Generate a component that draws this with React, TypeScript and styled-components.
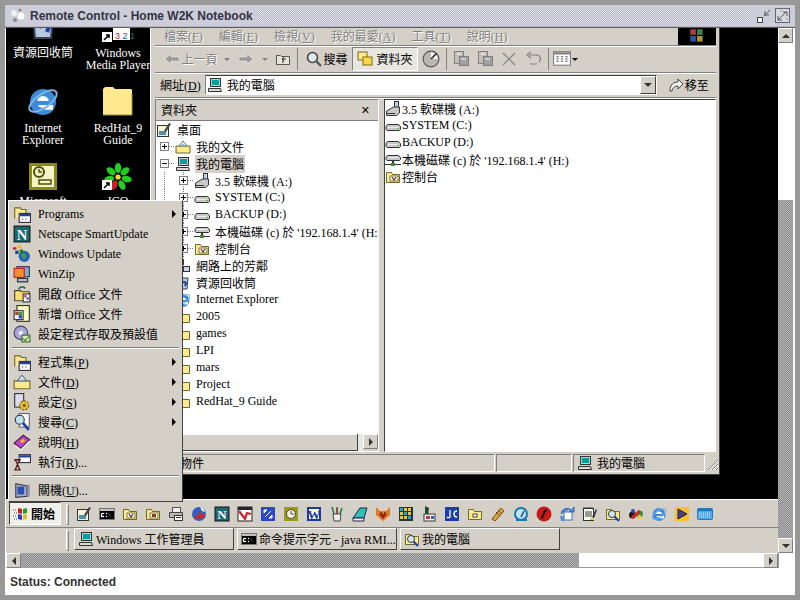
import React from 'react';
import styled, { createGlobalStyle } from 'styled-components';

const GREY = '#d4d0c8';
const UI_FONT = '"Liberation Serif", "Noto Sans CJK TC", serif';

const GlobalStyle = createGlobalStyle`
  html, body { margin: 0; padding: 0; width: 800px; height: 600px; overflow: hidden; }
  body { background: #989898; font-family: ${UI_FONT}; font-size: 12px; color: #000; }
`;

const N = ({ c, t }: { c: string; t: string }) => (
  <text x="8" y="13" fontSize="13" fontWeight="bold" fontFamily="Liberation Serif" textAnchor="middle" fill={c}>{t}</text>
);

const folder = (
  <path d="M1.5 13.5V3.5h5l1 2h7v8z" fill="#ffe98f" stroke="#6b6b2a" />
);
const glyphs: Record<string, React.ReactNode> = {
  folder,
  docs: (
    <>
      <path d="M1 14V7h14v7z" fill="#ffe98f" stroke="#6b6b2a" />
      <path d="M4 7l4-5 4 5z" fill="#fff" stroke="#5a7a8a" />
      <path d="M7 5l2 0 1 2H6z" fill="#8fb4d8" />
    </>
  ),
  computer: (
    <>
      <rect x="3.5" y="1.5" width="10" height="8" fill="#c8c8c8" stroke="#333" />
      <rect x="5" y="3" width="7" height="5" fill="#00a0a0" />
      <path d="M1.5 11.5h12l1 3h-13z" fill="#d8d8d8" stroke="#333" />
    </>
  ),
  floppy: (
    <>
      <rect x="9.5" y="0.5" width="4" height="7" fill="#bcd2ee" stroke="#333" />
      <path d="M1.5 10l7-4h6v6l-3 2.5h-10z" fill="#c8c8c8" stroke="#333" />
      <rect x="2" y="12" width="8" height="1" fill="#333" />
    </>
  ),
  drive: (
    <>
      <path d="M2.5 6.5h11l2 2v3l-1 1H2l-1-1v-3z" fill="#c8c8c8" stroke="#333" />
      <rect x="3" y="9" width="10" height="1" fill="#eee" />
      <rect x="12" y="10" width="2" height="1" fill="#3c3" />
    </>
  ),
  netdrive: (
    <>
      <path d="M2.5 3.5h11l2 2v2l-1 1H2l-1-1v-2z" fill="#c8c8c8" stroke="#333" />
      <rect x="3" y="5" width="10" height="1" fill="#eee" />
      <rect x="7" y="9" width="2" height="3" fill="#333" />
      <rect x="0" y="12" width="16" height="1" fill="#333" />
      <rect x="6" y="11" width="4" height="3" fill="#3a8a3a" />
    </>
  ),
  control: (
    <>
      {folder}
      <rect x="5" y="7" width="8" height="5" fill="#fff" stroke="#7a7a30" />
      <path d="M7 8l2 3 2-3" fill="none" stroke="#803030" strokeWidth="1.3" />
    </>
  ),
  desktop: (
    <>
      <rect x="1.5" y="3.5" width="11" height="11" fill="#f8f4d0" stroke="#333" />
      <path d="M3 9h7v4H3z" fill="#4a90b8" />
      <path d="M8 9l5-8 2 1-5 8z" fill="#444" />
    </>
  ),
  network: (
    <>
      <rect x="2.5" y="1.5" width="6" height="5" fill="#c8d8e8" stroke="#334" />
      <rect x="8.5" y="8.5" width="6" height="5" fill="#c8d8e8" stroke="#334" />
      <path d="M5 7v7h3" fill="none" stroke="#334" />
    </>
  ),
  recycle: (
    <>
      <path d="M3 3h10l-1 11H4z" fill="#b8c8e0" stroke="#345" />
      <path d="M6 9a3 3 0 0 1 5-1l-1 3" fill="none" stroke="#1a40b0" strokeWidth="2" />
    </>
  ),
  ie: (
    <>
      <circle cx="8" cy="8.5" r="6.5" fill="#3c8ad8" />
      <circle cx="8" cy="8.5" r="3" fill="#fff" />
      <rect x="4.5" y="8" width="8" height="2" fill="#3c8ad8" />
      <rect x="9" y="10" width="4" height="2.4" fill="#fff" />
      <ellipse cx="8" cy="8" rx="8" ry="3.4" fill="none" stroke="#7ab4e8" strokeWidth="1" transform="rotate(-35 8 8)" />
    </>
  ),
  programs: (
    <>
      <path d="M1.5 12V2.5h5l1 1.5h4v3" fill="#ffe98f" stroke="#6b6b2a" />
      <rect x="5.5" y="7.5" width="10" height="8" fill="#fff" stroke="#334" />
      <rect x="6" y="8" width="9" height="2" fill="#2040a0" />
      <rect x="8" y="12" width="1" height="1" fill="#444" />
      <rect x="11" y="12" width="1" height="1" fill="#444" />
    </>
  ),
  netscape: (
    <>
      <rect x="1" y="1" width="14" height="14" fill="#1a6a72" stroke="#111" />
      <N c="#fff" t="N" />
    </>
  ),
  wupdate: (
    <>
      <circle cx="10" cy="10" r="5" fill="#2860c0" />
      <path d="M7 9l3-2 2 3-2 3z" fill="#40a040" />
      <rect x="0" y="2" width="3" height="2" fill="#c02020" />
      <rect x="4" y="0" width="3" height="3" fill="#e0c020" />
      <rect x="2" y="5" width="3" height="3" fill="#2040a0" />
      <rect x="6" y="4" width="3" height="3" fill="#208020" />
    </>
  ),
  winzip: (
    <>
      <rect x="3.5" y="1.5" width="11" height="9" fill="#88a8d0" stroke="#334" />
      <rect x="1" y="3" width="9" height="8" fill="#f09030" stroke="#c02030" />
      <path d="M4 12h9v3H4z" fill="#b8b8c8" stroke="#334" />
    </>
  ),
  openoffice: (
    <>
      <path d="M1.5 14V5h5l1 1h7v8z" fill="#ffe070" stroke="#443" />
      <path d="M5 4c1-3 4-3 6-1" fill="none" stroke="#207040" strokeWidth="1.5" />
      <rect x="9" y="8" width="6" height="7" fill="#fff" stroke="#333" />
      <rect x="10" y="9" width="2" height="2" fill="#d03030" />
      <rect x="12" y="11" width="2" height="2" fill="#3050c0" />
    </>
  ),
  newoffice: (
    <>
      <rect x="3.5" y="0.5" width="11" height="14" fill="#ffffc0" stroke="#333" />
      <rect x="1" y="5" width="8" height="8" fill="#fff" stroke="#333" />
      <rect x="2" y="6" width="3" height="3" fill="#d03030" />
      <rect x="5" y="9" width="3" height="3" fill="#3050c0" />
      <rect x="5" y="6" width="3" height="3" fill="#30a040" />
    </>
  ),
  defaults: (
    <>
      <circle cx="7" cy="7" r="6" fill="#a8a8d8" stroke="#446" />
      <circle cx="7" cy="7" r="2" fill="#eef" />
      <rect x="8" y="9" width="7" height="6" fill="#e8e8c0" stroke="#363" />
      <path d="M9 12l2 2 3-4" fill="none" stroke="#209020" />
    </>
  ),
  settings: (
    <>
      <rect x="1.5" y="0.5" width="8" height="12" fill="#dde" stroke="#334" />
      <circle cx="10" cy="11" r="4" fill="#e8c030" stroke="#806010" strokeDasharray="2 1" />
      <circle cx="10" cy="11" r="1.5" fill="#806010" />
    </>
  ),
  search: (
    <>
      <rect x="5.5" y="0.5" width="9" height="12" fill="#fff" stroke="#667" />
      <circle cx="6" cy="6" r="4" fill="#bfe0f0" stroke="#334" />
      <path d="M9 9l5 6" stroke="#2040a0" strokeWidth="2.4" />
    </>
  ),
  help: (
    <>
      <path d="M1 9l8-7 6 4-8 8z" fill="#c040c0" stroke="#402040" />
      <path d="M6 7l3-2 2 2-3 2z" fill="#f0c030" />
      <path d="M2 11l5 4 8-8" fill="none" stroke="#fff" />
    </>
  ),
  run: (
    <>
      <rect x="5.5" y="1.5" width="10" height="7" fill="#fff" stroke="#334" />
      <rect x="6" y="2" width="9" height="2" fill="#2040a0" />
      <path d="M1 6h6M1 15h6M2 6l2 4-2 5M6 6L4 10l2 5" fill="none" stroke="#602020" strokeWidth="1.2" />
    </>
  ),
  shutdown: (
    <>
      <path d="M2.5 2.5l10 2v9l-10 1z" fill="#a8b0c8" stroke="#334" />
      <rect x="4" y="5" width="6" height="7" fill="#2850b0" />
      <rect x="13" y="3" width="2" height="11" fill="#99a" />
    </>
  ),
  flag: (
    <>
      <path d="M5 2l4 1v5L5 7z" fill="#d02020" />
      <path d="M10 3l4-1v5l-4 1z" fill="#20a030" />
      <path d="M5 8l4 1v5l-4-1z" fill="#2040c0" />
      <path d="M10 9l4-1v5l-4 1z" fill="#e0c020" />
      <path d="M0 4h3M1 7h3M0 10h3M1 13h3" stroke="#555" strokeDasharray="1 1" />
    </>
  ),
  cmd: (
    <>
      <rect x="0.5" y="2.5" width="15" height="11" fill="#000" stroke="#777" />
      <rect x="1" y="3" width="14" height="2" fill="#c0c0c0" />
      <path d="M3 7h2v1H3v2h2v1H2V8zM7 7h1v1H7zM7 10h1v1H7zM9 7l3 4" fill="#fff" stroke="#fff" strokeWidth="0.3" />
    </>
  ),
  phone: (
    <>
      {folder}
      <rect x="5" y="7" width="8" height="5" fill="#fff" stroke="#7a7a30" />
      <rect x="7" y="8" width="4" height="3" fill="#903030" />
    </>
  ),
  printer: (
    <>
      <rect x="4.5" y="1.5" width="8" height="5" fill="#eee" stroke="#555" />
      <path d="M1.5 6.5h13v5h-13z" fill="#b8b8b8" stroke="#444" />
      <rect x="6.5" y="9.5" width="8" height="5" fill="#fff" stroke="#333" />
      <rect x="8" y="11" width="5" height="1" fill="#333" />
    </>
  ),
  globe: (
    <>
      <circle cx="8" cy="8" r="7" fill="#2a60c8" />
      <path d="M3 13l2-5 2 2 2-6 2 5 2-3 1 6z" fill="#c03030" />
      <path d="M9 1a7 7 0 0 1 5 5l-3-1z" fill="#fff" />
    </>
  ),
  redwhite: (
    <>
      <rect x="1" y="1" width="14" height="14" fill="#fff" stroke="#222" />
      <rect x="1" y="1" width="14" height="3" fill="#223" />
      <path d="M2 5l6 8 2-6 4 1" fill="none" stroke="#d02020" strokeWidth="2.2" />
    </>
  ),
  bluearrows: (
    <>
      <rect x="1" y="1" width="14" height="14" fill="#2c48c8" />
      <path d="M4 4h3L4 7zM12 12H9l3-3zM8 8l3-3M8 8l-3 3" fill="#fff" stroke="#fff" />
    </>
  ),
  clock: (
    <>
      <rect x="1" y="1" width="14" height="14" fill="#9a9a18" />
      <circle cx="8" cy="8" r="4.5" fill="#f4f4d8" stroke="#445" />
      <path d="M8 5v3h3" fill="none" stroke="#445" />
    </>
  ),
  word: (
    <>
      <rect x="1" y="1" width="14" height="14" fill="#1a3aa0" />
      <rect x="3" y="3" width="10" height="10" fill="#fff" />
      <N c="#1a3aa0" t="W" />
    </>
  ),
  pencils: (
    <>
      <path d="M4 8h8l-1 7H5z" fill="#f0f0e8" stroke="#444" />
      <path d="M5 8L3 1M8 8V1M11 8l2-6" stroke="#208040" strokeWidth="1.6" />
      <path d="M8 8V2" stroke="#c03030" strokeWidth="1.4" />
    </>
  ),
  eraser: (
    <>
      <path d="M1 12L8 2h7l-3 10z" fill="#30c0b8" stroke="#224" />
      <path d="M1 12h11v3H1z" fill="#eef" stroke="#224" />
    </>
  ),
  fox: (
    <>
      <path d="M1 1l4 4h6l4-4v8l-7 6-7-6z" fill="#e07820" />
      <path d="M4 8h8l-4 5z" fill="#a02010" />
      <path d="M5 7h2M9 7h2" stroke="#111" />
    </>
  ),
  grid: (
    <>
      <rect x="1" y="1" width="14" height="14" fill="#234" />
      {[2, 6, 10].map((x) => [2, 6, 10].map((y) => (
        <rect key={`${x}-${y}`} x={x} y={y} width="3" height="3" fill={x === y ? '#30a0d0' : '#e8c830'} />
      )))}
    </>
  ),
  bottle: (
    <>
      <rect x="3" y="8" width="11" height="7" fill="#fff" stroke="#333" />
      <path d="M4 0l4 2-1 7-3-2z" fill="#243" />
      <rect x="5" y="10" width="4" height="3" fill="#d03030" />
      <rect x="10" y="10" width="3" height="3" fill="#3060c0" />
    </>
  ),
  jc: (
    <>
      <rect x="1" y="1" width="14" height="14" fill="#1c3ea8" />
      <path d="M6 4v7a2 2 0 0 1-3 0M13 5a3 3 0 1 0 0 6" fill="none" stroke="#fff" strokeWidth="1.3" />
    </>
  ),
  yfolder: (
    <>
      {folder}
      <rect x="6" y="8" width="4" height="3" fill="#fff" stroke="#444" />
    </>
  ),
  wrench: (
    <>
      <path d="M2 13L11 2l3 3L5 15z" fill="#e8a040" stroke="#705018" />
      <path d="M6 6l4 4M8 4l4 4" stroke="#705018" />
    </>
  ),
  quick: (
    <>
      <circle cx="8" cy="8" r="6" fill="#bfe4f4" stroke="#1878b0" strokeWidth="2" />
      <path d="M8 11l3-6" stroke="#2040a0" strokeWidth="1.6" />
      <rect x="3" y="13" width="11" height="2" fill="#1878b0" />
    </>
  ),
  flash: (
    <>
      <circle cx="8" cy="8" r="7.5" fill="#c81818" />
      <path d="M5 12c3 0 2-8 6-8" fill="none" stroke="#111" strokeWidth="2" />
    </>
  ),
  sync: (
    <>
      <path d="M2 8a6 6 0 0 1 10-4l-2 2h5V1l-1 1" fill="#5890d8" stroke="#2c5aa0" />
      <rect x="5" y="6" width="8" height="8" fill="#fff" stroke="#4070b0" />
      <path d="M1 10h4v5H2z" fill="#5890d8" />
    </>
  ),
  notepad: (
    <>
      <rect x="1.5" y="2.5" width="10" height="12" fill="#fff" stroke="#333" />
      <path d="M2 1v2M4 1v2M6 1v2M8 1v2M10 1v2M3 6h7M3 8h7M3 10h7" stroke="#333" />
      <path d="M10 11l4-8 1 1-3 8z" fill="#333" />
      <rect x="8" y="12" width="4" height="2" fill="#e8d040" />
    </>
  ),
  findfolder: (
    <>
      {folder}
      <circle cx="7" cy="8" r="3.5" fill="#cfe8f8" stroke="#334" />
      <path d="M9.5 10.5l4.5 4.5" stroke="#2040a0" strokeWidth="2.2" />
    </>
  ),
  chain: (
    <>
      <circle cx="4.5" cy="9" r="3.5" fill="#181818" />
      <circle cx="11.5" cy="8" r="3.5" fill="#20a040" />
      <path d="M4 12l8-7" stroke="#d02828" strokeWidth="3" />
      <circle cx="11.5" cy="11" r="2" fill="#f0d020" />
      <circle cx="5" cy="5" r="2" fill="#2050c0" />
    </>
  ),
  play: (
    <>
      <rect x="1" y="1" width="14" height="14" fill="#f8c030" />
      <path d="M4 3l9 5-9 5z" fill="#4a4088" stroke="#223" />
    </>
  ),
  keyboard: (
    <>
      <rect x="0.5" y="2.5" width="15" height="11" rx="1" fill="#48a8e8" stroke="#2878b8" />
      <path d="M2 7h12M2 9h12M2 11h12" stroke="#d8f0ff" strokeDasharray="1 1" />
      <rect x="1" y="3" width="14" height="2" fill="#1878c8" />
    </>
  ),
  back: <path d="M1 8l6-5v3h8v4H7v3z" fill="#9a9a9a" stroke="#fff" strokeWidth="0.4" />,
  forward: <path d="M15 8L9 3v3H1v4h8v3z" fill="#9a9a9a" stroke="#fff" strokeWidth="0.4" />,
  up: (
    <>
      <path d="M1.5 13.5v-9h4l1 1h8v8z" fill="#e8e4d8" stroke="#555" />
      <path d="M8 12V8h3M9 6L7 8l2 2" fill="none" stroke="#333" />
    </>
  ),
  searchtool: (
    <>
      <circle cx="6.5" cy="6.5" r="5" fill="#dfe8e8" stroke="#444" strokeWidth="1.6" />
      <path d="M10 10l5 5" stroke="#555" strokeWidth="2.4" />
    </>
  ),
  foldertool: (
    <>
      <rect x="1" y="1" width="9" height="8" fill="#ffe98f" stroke="#7a6a10" />
      <rect x="6" y="6" width="9" height="8" fill="#ffd84a" stroke="#7a6a10" />
    </>
  ),
  history: (
    <>
      <circle cx="8" cy="8" r="7" fill="#b8b8b0" stroke="#555" />
      <path d="M8 8V2a6 6 0 0 1 6 6z" fill="#fff" />
      <path d="M8 8l5-5" stroke="#333" strokeWidth="1.5" />
    </>
  ),
  move: (
    <>
      <rect x="1.5" y="0.5" width="9" height="12" fill="#c4c0b8" stroke="#808080" />
      <rect x="6.5" y="5.5" width="9" height="9" fill="#a0a0a0" stroke="#808080" />
      <path d="M4 3h4M8 8h5" stroke="#fff" />
    </>
  ),
  close: <path d="M2 2l12 12M14 2L2 14" stroke="#808080" strokeWidth="1.2" />,
  undo: <path d="M14 11a4 4 0 0 0-3-7H4M6 1L2 4l4 3M5 13h7" fill="none" stroke="#808080" strokeWidth="1.2" />,
  views: (
    <>
      <rect x="0.5" y="1.5" width="15" height="12" fill="#fff" stroke="#808080" />
      <rect x="1" y="2" width="14" height="2" fill="#808080" />
      <path d="M3 6h2M7 6h2M11 6h2M3 8h2M7 8h2M11 8h2M3 10h2M7 10h2M11 10h2" stroke="#555" />
    </>
  ),
  go: <path d="M2 14c0-7 4-9 8-9V2l5 5-5 5V9c-3 0-5 1-6 5z" fill="#f4f4f0" stroke="#444" />,
};

const Icon = ({ name, size = 16 }: { name: string; size?: number }) => (
  <IconSvg viewBox="0 0 16 16" width={size} height={size}>{glyphs[name]}</IconSvg>
);

const IconSvg = styled.svg`
  flex: none;
  display: block;
`;

const Key = styled.span`
  text-decoration: underline;
`;

const App: React.FC = () => (
  <>
    <GlobalStyle />
    <Frame>
      <TitleBar>
        <TitleLogo viewBox="0 0 16 16" width={16} height={16}>
          <circle cx="4" cy="5" r="3" fill="#f0f0f0" />
          <circle cx="11" cy="8" r="3.5" fill="#fff" />
          <circle cx="5" cy="12" r="2" fill="#888" />
          <circle cx="10" cy="2" r="1.5" fill="#888" />
        </TitleLogo>
        <TitleText>Remote Control - Home W2K Notebook</TitleText>
        <Stipple />
        <TitleButtons>
          <svg viewBox="0 0 16 16" width={16} height={16}>
            <rect x="1.5" y="9.5" width="5" height="5" fill="#f4f4f8" stroke="#444" />
            <path d="M8 8l6-6M9 3v4h4" fill="none" stroke="#555" />
          </svg>
          <svg viewBox="0 0 16 16" width={16} height={16}>
            <rect x="0.5" y="0.5" width="14" height="14" fill="#d8d8e0" stroke="#666" />
            <path d="M3 12l8-8M8 4h4v4M3 8v4h4" fill="none" stroke="#555" />
            <path d="M5 3h2M12 10v2" stroke="#999" />
          </svg>
        </TitleButtons>
      </TitleBar>
      <Viewport>
        <Remote>
          <Desktop>
            {desktopIcons.map((d) => (
              <DesktopIcon key={d.top} $x={d.x} $y={d.y}>
                {d.logo}
                {d.lines.map((l) => <DesktopLabel key={l}>{l}</DesktopLabel>)}
              </DesktopIcon>
            ))}
            <Explorer />
          </Desktop>
          <Taskbar>
            <QuickRow>
              <StartButton>
                <Icon name="flag" />
                <StartText>開始</StartText>
              </StartButton>
              <Grip />
              <QuickIcons>
                {quickLaunch.map((q, i) => <Icon key={i} name={q} />)}
              </QuickIcons>
            </QuickRow>
            <TaskRow>
              <Grip />
              {tasks.map((t) => (
                <TaskButton key={t.label}>
                  <Icon name={t.icon} />
                  <TaskLabel>{t.label}</TaskLabel>
                </TaskButton>
              ))}
            </TaskRow>
          </Taskbar>
          <StartMenu>
            {startItems.map((item, i) =>
              item === null ? (
                <MenuDivider key={i} />
              ) : (
                <MenuItem key={item.icon + i}>
                  <Icon name={item.icon} size={18} />
                  <MenuText>{item.label}</MenuText>
                  {item.arrow && <SubArrow />}
                </MenuItem>
              ),
            )}
          </StartMenu>
        </Remote>
        <VBar>
          <ScrollBtn><ArrowUp /></ScrollBtn>
          <VTrack />
          <VThumb />
          <ScrollBtn><ArrowDown /></ScrollBtn>
        </VBar>
      </Viewport>
      <HBar>
        <ScrollBtn><ArrowLeft /></ScrollBtn>
        <HThumb />
        <HTrack />
        <ScrollBtn><ArrowRight /></ScrollBtn>
        <Corner />
      </HBar>
      <StatusLine>Status: Connected</StatusLine>
    </Frame>
  </>
);

const Explorer: React.FC = () => (
  <ExplorerWindow>
    <MenuBar>
      {menus.map(([label, key]) => (
        <MenuLabel key={key}>{label}(<Key>{key}</Key>)</MenuLabel>
      ))}
      <Throbber>
        <svg viewBox="0 0 16 16" width={18} height={18}>
          <rect x="2" y="2" width="5" height="5" fill="#a04040" />
          <rect x="8" y="2" width="5" height="5" fill="#408040" />
          <rect x="2" y="8" width="5" height="5" fill="#3050a0" />
          <rect x="8" y="8" width="5" height="5" fill="#b09030" />
        </svg>
      </Throbber>
    </MenuBar>
    <ToolBar>
      <Tool $w={56} $muted><Icon name="back" /><span>上一頁</span></Tool>
      <Tool $w={16}><Caret $muted /></Tool>
      <Tool $w={22}><Icon name="forward" /></Tool>
      <Tool $w={16}><Caret $muted /></Tool>
      <Tool $w={19}><Icon name="up" /></Tool>
      <ToolSep $w={10} />
      <Tool $w={50}><Icon name="searchtool" /><span>搜尋</span></Tool>
      <Tool $w={66} $pressed $gap={3}><Icon name="foldertool" /><span>資料夾</span></Tool>
      <Tool $w={26}><Icon name="history" size={18} /></Tool>
      <ToolSep $w={4} />
      <Tool $w={26}><Icon name="move" /></Tool>
      <Tool $w={22}><Icon name="move" /></Tool>
      <Tool $w={25}><Icon name="close" /></Tool>
      <Tool $w={23}><Icon name="undo" /></Tool>
      <ToolSep $w={8} />
      <Tool $w={26}><Icon name="views" size={18} /><Caret /></Tool>
    </ToolBar>
    <AddressBar>
      <span>網址(<Key>D</Key>)</span>
      <AddressBox>
        <Icon name="computer" />
        <AddressText>我的電腦</AddressText>
        <ComboButton><ArrowDown /></ComboButton>
      </AddressBox>
      <GoButton><Icon name="go" />移至</GoButton>
    </AddressBar>
    <Panes>
      <TreePane>
        <PaneHeader>
          <span>資料夾</span>
          <PaneClose>✕</PaneClose>
        </PaneHeader>
        <Tree>
          {tree.map((row) => (
            <TreeRow key={row.label} $depth={row.depth}>
              {row.depth > 0 && <Expander $open={row.open} $blank={row.blank} />}
              <Icon name={row.icon} />
              <TreeText $selected={row.selected}>{row.label}</TreeText>
            </TreeRow>
          ))}
        </Tree>
        <TreeScroll>
          <TreeThumb />
          <TreeStipple />
          <ScrollBtn><ArrowRight /></ScrollBtn>
        </TreeScroll>
      </TreePane>
      <FileList>
        {files.map((f) => (
          <FileRow key={f.label}>
            <Icon name={f.icon} />
            <span>{f.label}</span>
          </FileRow>
        ))}
      </FileList>
    </Panes>
    <StatusBar>
      <StatusCell $w={340}>7 個物件</StatusCell>
      <StatusCell $w={76} />
      <StatusCell $w={132}><Icon name="computer" />我的電腦</StatusCell>
      <SizeGrip viewBox="0 0 12 16" width={12} height={16}>
        <path d="M12 4L2 14M12 8l-6 6M12 12l-2 2" stroke="#808080" />
        <path d="M12 5L3 14M12 9l-5 5M12 13l-1 1" stroke="#fff" />
      </SizeGrip>
    </StatusBar>
  </ExplorerWindow>
);

const desktopIcons = [
  {
    top: 'recycle', x: 21, y: -18, lines: ['資源回收筒'],
    logo: <Icon name="recycle" size={32} />,
  },
  {
    top: 'wmp', x: 96, y: -18, lines: ['Windows', 'Media Player'],
    logo: (
      <svg viewBox="0 0 32 32" width={32} height={32}>
        <rect x="11" y="18" width="17" height="12" fill="#fff" />
        <rect x="0" y="22" width="10" height="10" fill="#fff" />
        <path d="M2 30l5-5M4 25h3v3" stroke="#000" strokeWidth="1.5" fill="none" />
        <text x="13" y="29" fontSize="9" fontFamily="Liberation Sans" fill="#205090">
          <tspan fill="#b02020">3</tspan> 2 <tspan fill="#208040">1</tspan>
        </text>
      </svg>
    ),
  },
  {
    top: 'ie', x: 21, y: 57, lines: ['Internet', 'Explorer'],
    logo: <Icon name="ie" size={32} />,
  },
  {
    top: 'redhat', x: 96, y: 57, lines: ['RedHat_9', 'Guide'],
    logo: (
      <svg viewBox="0 0 32 32" width={32} height={32}>
        <path d="M1 30V4l2-2h8l2 2h16l1 1v25z" fill="#ffe88e" />
        <path d="M1 30h29V9" fill="none" stroke="#a09040" />
      </svg>
    ),
  },
  {
    top: 'outlook', x: 21, y: 130, lines: ['Microsoft'],
    logo: (
      <svg viewBox="0 0 32 32" width={32} height={32}>
        <rect x="2" y="5" width="28" height="27" fill="#8a8a10" />
        <rect x="5" y="8" width="22" height="21" fill="#f4f4c8" />
        <circle cx="12" cy="14" r="5" fill="#f4f4c8" stroke="#505008" strokeWidth="2" />
        <path d="M12 11v3h3M12 22h12v4H12z" fill="none" stroke="#505008" strokeWidth="1.5" />
      </svg>
    ),
  },
  {
    top: 'icq', x: 96, y: 130, lines: ['ICQ'],
    logo: (
      <svg viewBox="0 0 32 32" width={32} height={32}>
        {[0, 51, 103, 154, 206, 257, 309].map((a) => (
          <ellipse key={a} cx="16" cy="10" rx="3.2" ry="5" fill={a === 206 ? '#d02020' : '#20d020'} transform={`rotate(${a} 16 19)`} />
        ))}
        <circle cx="16" cy="19" r="2.6" fill="#f0e020" />
        <rect x="0" y="22" width="10" height="10" fill="#fff" />
        <path d="M2 30l5-5M4 25h3v3" stroke="#000" strokeWidth="1.5" fill="none" />
      </svg>
    ),
  },
];

const quickLaunch = [
  'desktop', 'cmd', 'control', 'phone', 'printer', 'globe', 'netscape', 'redwhite', 'bluearrows', 'clock',
  'word', 'pencils', 'eraser', 'fox', 'grid', 'bottle', 'jc', 'yfolder', 'wrench', 'quick',
  'flash', 'sync', 'notepad', 'findfolder', 'chain', 'ie', 'play', 'keyboard',
];

const tasks = [
  { icon: 'computer', label: 'Windows 工作管理員' },
  { icon: 'cmd', label: '命令提示字元 - java RMI...' },
  { icon: 'findfolder', label: '我的電腦' },
];

const startItems: ({ icon: string; label: React.ReactNode; arrow?: boolean } | null)[] = [
  { icon: 'programs', label: 'Programs', arrow: true },
  { icon: 'netscape', label: 'Netscape SmartUpdate' },
  { icon: 'wupdate', label: 'Windows Update' },
  { icon: 'winzip', label: 'WinZip' },
  { icon: 'openoffice', label: '開啟 Office 文件' },
  { icon: 'newoffice', label: '新增 Office 文件' },
  { icon: 'defaults', label: '設定程式存取及預設值' },
  null,
  { icon: 'programs', label: <>程式集(<Key>P</Key>)</>, arrow: true },
  { icon: 'docs', label: <>文件(<Key>D</Key>)</>, arrow: true },
  { icon: 'settings', label: <>設定(<Key>S</Key>)</>, arrow: true },
  { icon: 'search', label: <>搜尋(<Key>C</Key>)</>, arrow: true },
  { icon: 'help', label: <>說明(<Key>H</Key>)</> },
  { icon: 'run', label: <>執行(<Key>R</Key>)...</> },
  null,
  { icon: 'shutdown', label: <>關機(<Key>U</Key>)...</> },
];

const menus = [
  ['檔案', 'F'], ['編輯', 'E'], ['檢視', 'V'], ['我的最愛', 'A'], ['工具', 'T'], ['說明', 'H'],
];

type TreeItem = {
  label: string; icon: string; depth: number;
  open?: boolean; blank?: boolean; selected?: boolean;
};

const tree: TreeItem[] = [
  { label: '桌面', icon: 'desktop', depth: 0 },
  { label: '我的文件', icon: 'docs', depth: 1 },
  { label: '我的電腦', icon: 'computer', depth: 1, open: true, selected: true },
  { label: '3.5 軟碟機 (A:)', icon: 'floppy', depth: 2 },
  { label: 'SYSTEM (C:)', icon: 'drive', depth: 2 },
  { label: 'BACKUP (D:)', icon: 'drive', depth: 2 },
  { label: "本機磁碟 (c) 於 '192.168.1.4' (H:)", icon: 'netdrive', depth: 2 },
  { label: '控制台', icon: 'control', depth: 2 },
  { label: '網路上的芳鄰', icon: 'network', depth: 1, blank: true },
  { label: '資源回收筒', icon: 'recycle', depth: 1, blank: true },
  { label: 'Internet Explorer', icon: 'ie', depth: 1, blank: true },
  { label: '2005', icon: 'folder', depth: 1, blank: true },
  { label: 'games', icon: 'folder', depth: 1, blank: true },
  { label: 'LPI', icon: 'folder', depth: 1, blank: true },
  { label: 'mars', icon: 'folder', depth: 1, blank: true },
  { label: 'Project', icon: 'folder', depth: 1, blank: true },
  { label: 'RedHat_9 Guide', icon: 'folder', depth: 1, blank: true },
];

const files = [
  { label: '3.5 軟碟機 (A:)', icon: 'floppy' },
  { label: 'SYSTEM (C:)', icon: 'drive' },
  { label: 'BACKUP (D:)', icon: 'drive' },
  { label: "本機磁碟 (c) 於 '192.168.1.4' (H:)", icon: 'netdrive' },
  { label: '控制台', icon: 'control' },
];

const Frame = styled.div`
  width: 790px;
  height: 590px;
  margin: 5px;
  background: #fff;
  display: flex;
  flex-direction: column;
`;

const TitleBar = styled.div`
  height: 22px;
  flex: none;
  background: #cdcdda;
  display: flex;
  align-items: center;
  padding: 0 4px 0 5px;
  box-shadow: inset 0 -1px 0 #b8b8c4;
`;

const TitleLogo = styled.svg`
  flex: none;
  margin-right: 4px;
`;

const TitleText = styled.span`
  font: bold 12px "Liberation Sans", sans-serif;
  color: #333344;
  white-space: nowrap;
`;

const stipple = (a: string, b: string) => `
  background: repeating-conic-gradient(${a} 0 25%, ${b} 0 50%) 0 0 / 2px 2px;
`;

const Stipple = styled.div`
  flex: 1;
  height: 16px;
  margin: 0 5px;
  ${stipple('#b4b4c0', '#e4e4ee')}
`;

const TitleButtons = styled.div`
  display: flex;
  gap: 3px;
`;

const Viewport = styled.div`
  height: 526px;
  flex: none;
  display: flex;
  padding-left: 1px;
  border-top: 1px solid #5c5c5c;
  padding-right: 2px;
  box-sizing: border-box;
`;

const Remote = styled.div`
  position: relative;
  width: 773px;
  display: flex;
  flex-direction: column;
`;

const Desktop = styled.div`
  position: relative;
  flex: 1;
  background: #000;
  overflow: hidden;
`;

const DesktopIcon = styled.div<{ $x: number; $y: number }>`
  position: absolute;
  left: ${(p) => p.$x}px;
  top: ${(p) => p.$y}px;
  width: 74px;
  margin-left: -21px;
  display: flex;
  flex-direction: column;
  align-items: center;
  color: #fff;
  line-height: 12px;

  svg {
    margin-bottom: 5px;
  }
`;

const DesktopLabel = styled.span`
  white-space: nowrap;
`;

const ExplorerWindow = styled.div`
  position: absolute;
  left: 144px;
  top: -5px;
  width: 570px;
  height: 452px;
  box-sizing: border-box;
  background: ${GREY};
  border-left: 1px solid #fff;
  border-right: 1px solid #404040;
  border-bottom: 1px solid #404040;
  padding: 3px 3px 2px 4px;
  display: flex;
  flex-direction: column;
`;

const MenuBar = styled.div`
  height: 19px;
  flex: none;
  display: flex;
  align-items: center;
  gap: 16px;
  padding-left: 9px;
  border-bottom: 1px solid #808080;
  box-shadow: 0 1px 0 #fff;
`;

const MenuLabel = styled.span`
  color: #808080;
  text-shadow: 1px 1px 0 #fff;
`;

const Throbber = styled.div`
  margin-left: auto;
  width: 38px;
  height: 19px;
  background: #000;
  display: flex;
  justify-content: center;
  align-items: flex-end;
`;

const ToolBar = styled.div`
  height: 26px;
  flex: none;
  display: flex;
  align-items: center;
  padding-left: 8px;
  border-bottom: 1px solid #808080;
  box-shadow: 0 1px 0 #fff;
`;

const Tool = styled.div<{ $w: number; $muted?: boolean; $pressed?: boolean; $gap?: number }>`
  width: ${(p) => p.$w}px;
  height: 24px;
  flex: none;
  box-sizing: border-box;
  display: flex;
  align-items: center;
  justify-content: center;
  gap: ${(p) => p.$gap ?? 1}px;
  white-space: nowrap;
  color: ${(p) => (p.$muted ? '#808080' : '#000')};
  ${(p) => p.$muted && 'text-shadow: 1px 1px 0 #fff;'}
  ${(p) =>
    p.$pressed &&
    `
    background: #e8e6e0;
    border: 1px solid;
    border-color: #808080 #fff #fff #808080;
  `}
`;

const ToolSep = styled.div<{ $w: number }>`
  width: ${(p) => p.$w}px;
  height: 22px;
  flex: none;
  background: linear-gradient(#808080, #808080) center / 1px 100% no-repeat;
`;

const Caret = styled.span<{ $muted?: boolean }>`
  width: 0;
  height: 0;
  flex: none;
  border: 3px solid transparent;
  border-top: 3px solid ${(p) => (p.$muted ? '#808080' : '#000')};
  border-bottom: 0;
`;

const AddressBar = styled.div`
  height: 24px;
  flex: none;
  display: flex;
  align-items: center;
  padding-left: 5px;
  border-bottom: 1px solid #808080;
  box-shadow: 0 1px 0 #fff;
`;

const AddressBox = styled.div`
  width: 452px;
  height: 20px;
  margin-left: 4px;
  box-sizing: border-box;
  display: flex;
  align-items: center;
  gap: 4px;
  background: #fff;
  border: 1px solid;
  border-color: #404040 #fff #fff #808080;
  padding-left: 1px;
`;

const AddressText = styled.span`
  flex: 1;
`;

const ComboButton = styled.div`
  width: 16px;
  height: 18px;
  box-sizing: border-box;
  background: ${GREY};
  border: 1px solid;
  border-color: #fff #404040 #404040 #fff;
  display: flex;
  align-items: center;
  justify-content: center;
`;

const GoButton = styled.div`
  display: flex;
  align-items: center;
  margin-left: 11px;
  gap: 1px;
`;

const Panes = styled.div`
  flex: 1;
  min-height: 0;
  margin-top: 1px;
  display: flex;
  gap: 5px;
`;

const TreePane = styled.div`
  width: 224px;
  flex: none;
  box-sizing: border-box;
  display: flex;
  flex-direction: column;
  background: #fff;
  border: 1px solid;
  border-color: #808080 #fff #fff #808080;
`;

const PaneHeader = styled.div`
  height: 20px;
  flex: none;
  background: ${GREY};
  display: flex;
  align-items: center;
  justify-content: space-between;
  padding: 0 8px 0 5px;
  border-bottom: 1px solid #808080;
`;

const PaneClose = styled.span`
  font: bold 11px "DejaVu Sans", sans-serif;
`;

const Tree = styled.div`
  flex: 1;
  min-height: 0;
  overflow: hidden;
`;

const TreeRow = styled.div<{ $depth: number }>`
  height: 17px;
  display: flex;
  align-items: center;
  white-space: nowrap;
  position: relative;
  padding-left: ${(p) => [0, 4, 23][p.$depth]}px;
  gap: 4px;

  ${(p) =>
    p.$depth === 2 &&
    `
    &::before {
      content: '';
      position: absolute;
      left: 8px;
      top: 0;
      bottom: 0;
      border-left: 1px dotted #808080;
    }
    &::after {
      content: '';
      position: absolute;
      left: 27px;
      top: 0;
      bottom: 0;
      border-left: 1px dotted #808080;
    }
  `}
`;

const Expander = styled.span<{ $open?: boolean; $blank?: boolean }>`
  width: 9px;
  height: 9px;
  flex: none;
  margin-right: 2px;
  box-sizing: border-box;
  position: relative;
  z-index: 1;
  ${(p) =>
    !p.$blank &&
    `
    border: 1px solid #808080;
    background: linear-gradient(#000, #000) center / 5px 1px no-repeat #fff;

    &::after {
      content: '';
      position: absolute;
      left: 8px;
      top: 3px;
      width: 5px;
      border-top: 1px dotted #808080;
    }
  `}
  ${(p) =>
    !p.$blank &&
    !p.$open &&
    `
    &::before {
      content: '';
      position: absolute;
      left: 3px;
      top: 1px;
      width: 1px;
      height: 5px;
      background: #000;
    }
  `}
`;

const TreeText = styled.span<{ $selected?: boolean }>`
  padding: 0 1px;
  background: ${(p) => (p.$selected ? GREY : 'transparent')};
`;

const TreeScroll = styled.div`
  height: 17px;
  flex: none;
  display: flex;
  background: ${GREY};
  box-shadow: inset 0 1px 0 #fff;
`;

const TreeThumb = styled.div`
  flex: 1;
  border-right: 1px solid #404040;
  border-bottom: 1px solid #404040;
`;

const TreeStipple = styled.div`
  width: 5px;
  ${stipple('#d4d0c8', '#ffffff')}
`;

const FileList = styled.div`
  flex: 1;
  min-width: 0;
  background: #fff;
  border: 1px solid;
  border-color: #404040 #fff #fff #404040;
`;

const FileRow = styled.div`
  height: 17px;
  display: flex;
  align-items: center;
  white-space: nowrap;
  gap: 1px;
`;

const StatusBar = styled.div`
  height: 18px;
  flex: none;
  margin-top: 2px;
  display: flex;
  gap: 1px;
`;

const StatusCell = styled.div<{ $w: number }>`
  width: ${(p) => p.$w}px;
  flex: none;
  box-sizing: border-box;
  display: flex;
  align-items: center;
  gap: 4px;
  padding-left: 3px;
  border: 1px solid;
  border-color: #808080 #fff #fff #808080;
  overflow: hidden;
`;

const SizeGrip = styled.svg`
  flex: none;
  margin-left: auto;
  align-self: flex-end;
`;

const Taskbar = styled.div`
  height: 54px;
  flex: none;
  background: ${GREY};
  border-top: 1px solid #fff;
  box-sizing: border-box;
  display: flex;
  flex-direction: column;
`;

const QuickRow = styled.div`
  height: 27px;
  flex: none;
  display: flex;
  align-items: center;
  padding-left: 3px;
  border-bottom: 1px solid #808080;
`;

const TaskRow = styled.div`
  flex: 1;
  display: flex;
  align-items: flex-start;
  padding-left: 55px;
  gap: 3px;
`;

const StartButton = styled.div`
  width: 52px;
  height: 23px;
  box-sizing: border-box;
  display: flex;
  align-items: center;
  gap: 2px;
  padding-left: 3px;
  border: 1px solid;
  border-color: #404040 #fff #fff #404040;
  background: repeating-conic-gradient(#e8e6e0 0 25%, #fafaf4 0 50%) 0 0 / 2px 2px;
`;

const StartText = styled.span`
  font-weight: bold;
  white-space: nowrap;
`;

const Grip = styled.div`
  width: 3px;
  height: 21px;
  flex: none;
  margin: 2px 2px 0 5px;
  box-sizing: border-box;
  border: 1px solid;
  border-color: #fff #808080 #808080 #fff;
`;

const QuickIcons = styled.div`
  display: flex;
  gap: 7px;
  margin-left: 5px;
`;

const TaskButton = styled.div`
  width: 160px;
  height: 22px;
  box-sizing: border-box;
  display: flex;
  align-items: center;
  gap: 2px;
  padding-left: 3px;
  padding-bottom: 1px;
  overflow: hidden;
  white-space: nowrap;
  border: 1px solid;
  border-color: #fff #404040 #404040 #fff;
`;

const TaskLabel = styled.span`
  overflow: hidden;
`;

const StartMenu = styled.div`
  position: absolute;
  left: 2px;
  top: 172px;
  width: 175px;
  box-sizing: border-box;
  padding: 3px 1px 1px 3px;
  background: ${GREY};
  border: 1px solid;
  border-color: #fff #404040 #404040 #fff;
  z-index: 2;
`;

const MenuItem = styled.div`
  height: 20px;
  display: flex;
  align-items: center;
  padding-left: 1px;
  position: relative;
`;

const MenuText = styled.span`
  margin-left: 7px;
  white-space: nowrap;
`;

const SubArrow = styled.span`
  position: absolute;
  right: 5px;
  top: 6px;
  border: 4px solid transparent;
  border-left: 4px solid #000;
  border-right: 0;
`;

const MenuDivider = styled.div`
  height: 2px;
  margin: 3px 2px 3px 0;
  background: #808080;
  border-bottom: 1px solid #fff;
  box-sizing: border-box;
`;

const VBar = styled.div`
  width: 15px;
  flex: none;
  display: flex;
  flex-direction: column;
`;

const ScrollBtn = styled.div`
  width: 15px;
  height: 15px;
  flex: none;
  box-sizing: border-box;
  background: ${GREY};
  border: 1px solid;
  border-color: #fff #808080 #808080 #fff;
  display: flex;
  align-items: center;
  justify-content: center;
`;

const ArrowUp = styled.span`
  border: 4px solid transparent;
  border-bottom: 4px solid #333;
  border-top: 0;
`;

const ArrowDown = styled.span`
  border: 4px solid transparent;
  border-top: 4px solid #333;
  border-bottom: 0;
`;

const ArrowLeft = styled.span`
  border: 4px solid transparent;
  border-right: 4px solid #333;
  border-left: 0;
`;

const ArrowRight = styled.span`
  border: 4px solid transparent;
  border-left: 4px solid #333;
  border-right: 0;
`;

const VTrack = styled.div`
  height: 157px;
  flex: none;
  background: #fff;
`;

const VThumb = styled.div`
  flex: 1;
  ${stipple('#8c8c8c', '#b4b4b4')}
`;

const HBar = styled.div`
  height: 15px;
  flex: none;
  display: flex;
  padding: 0 2px 0 1px;
`;

const HThumb = styled.div`
  width: 558px;
  flex: none;
  ${stipple('#8c8c8c', '#b4b4b4')}
`;

const HTrack = styled.div`
  flex: 1;
  background: #fff;
  border-bottom: 1px solid #989898;
`;

const Corner = styled.div`
  width: 15px;
  flex: none;
  border-left: 1px solid #989898;
  box-sizing: border-box;
`;

const StatusLine = styled.div`
  flex: 1;
  padding-left: 5px;
  font: bold 12px "Liberation Sans", sans-serif;
  color: #333;
  display: flex;
  align-items: center;
`;

export default App;
